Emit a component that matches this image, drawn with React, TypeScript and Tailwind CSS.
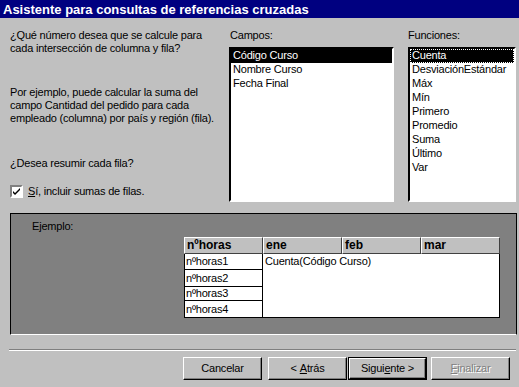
import React from "react";

const campos = ["Código Curso", "Nombre Curso", "Fecha Final"];
const funciones = ["Cuenta", "DesviaciónEstándar", "Máx", "Mín", "Primero", "Promedio", "Suma", "Último", "Var"];
const filas = [
  {label: "nºhoras1", h: "h-[16px]"},
  {label: "nºhoras2", h: "h-[17px]"},
  {label: "nºhoras3", h: "h-[14px]"},
  {label: "nºhoras4", h: "h-[17px]"},
];

const sunken =
  "border-2 border-t-[#808080] border-l-[#808080] border-b-white border-r-white";

const Button = ({children, isDefault = false, disabled = false}: {children: React.ReactNode; isDefault?: boolean; disabled?: boolean}) => (
  <div className={`${isDefault ? "border border-black" : ""} w-[79px] h-[23px]`}>
    <div
      className={`flex h-full w-full items-center justify-center bg-[#c0c0c0] border-t border-l border-t-white border-l-white border-b border-r border-b-black border-r-black shadow-[inset_-1px_-1px_0_#808080] ${
        disabled ? "text-[#808080] [text-shadow:1px_1px_0_#fff]" : "text-black"
      }`}
    >
      {children}
    </div>
  </div>
);

const App = () => {
  return (
    <div
      className="flex h-[387px] w-[519px] flex-col overflow-hidden bg-[#c0c0c0] text-[11px] leading-[13px] tracking-[-0.2px] text-black"
      style={{fontFamily: '"Liberation Sans", Arial, sans-serif'}}
    >
      <div className="flex h-[18px] items-center bg-[#000080] pl-[3px] text-[13px] font-bold tracking-normal text-white">
        Asistente para consultas de referencias cruzadas
      </div>

      <div className="flex h-[195px]">
        <div className="flex w-[219px] flex-col whitespace-nowrap pl-[10px] pt-[11px]">
          <p>
            ¿Qué número desea que se calcule para
            <br />
            cada intersección de columna y fila?
          </p>
          <p className="mt-[31px]">
            Por ejemplo, puede calcular la suma del
            <br />
            campo Cantidad del pedido para cada
            <br />
            empleado (columna) por país y región (fila).
          </p>
          <p className="mt-[32px]">¿Desea resumir cada fila?</p>
          <div className="mt-[15px] flex items-center gap-[5px]">
            <div className={`relative h-[13px] w-[13px] bg-white ${sunken} border-b-[#dfdfdf] border-r-[#dfdfdf]`}>
              <svg viewBox="0 0 9 9" className="absolute left-0 top-0 h-[9px] w-[9px]">
                <path d="M1 4 L1 6 L3 8 L8 3 L8 1 L3 6 Z" fill="black" />
              </svg>
            </div>
            <span>
              <span className="underline">S</span>í, incluir sumas de filas.
            </span>
          </div>
        </div>

        <div className="ml-[10px] flex w-[165px] flex-col pt-[11px]">
          <span className="pl-[1px]">Campos:</span>
          <div className={`mt-[5px] h-[155px] bg-white ${sunken} border-t-black border-l-black`}>
            {campos.map((c, i) => (
              <div key={c} className={`h-[14px] pl-[2px] ${i === 0 ? "bg-black text-white" : ""}`}>
                {c}
              </div>
            ))}
          </div>
        </div>

        <div className="ml-[14px] flex w-[108px] flex-col pt-[11px]">
          <span>Funciones:</span>
          <div className={`mt-[5px] h-[155px] bg-white ${sunken} border-t-black border-l-black`}>
            {funciones.map((f, i) => (
              <div
                key={f}
                className={`h-[14px] pl-[2px] whitespace-nowrap ${i === 0 ? "bg-black text-white outline outline-1 -outline-offset-1 outline-dotted outline-white" : ""}`}
              >
                {f}
              </div>
            ))}
          </div>
        </div>
      </div>

      <div className="ml-[10px] flex h-[122px] w-[507px] flex-col border border-t-black border-l-black border-b-white border-r-black bg-[#808080]">
        <span className="pl-[21px] pt-[6px]">Ejemplo:</span>
        <div className="ml-[173px] mt-[4px] flex flex-col">
          <div className="flex">
            {["nºhoras", "ene", "feb", "mar"].map((h) => (
              <div
                key={h}
                className="flex h-[17px] w-[79px] items-center border-t border-l border-t-white border-l-white border-b border-r border-b-[#404040] border-r-[#404040] bg-[#c0c0c0] pl-[2px] text-[12px] font-bold tracking-normal"
              >
                {h}
              </div>
            ))}
          </div>
          <div className="flex">
            <div className="flex w-[79px] flex-col">
              {filas.map((r) => (
                <div key={r.label} className={`${r.h} flex items-center border border-t-0 border-black bg-white pl-[1px]`}>
                  {r.label}
                </div>
              ))}
            </div>
            <div className="h-[64px] w-[237px] border border-t-0 border-l-0 border-black bg-white pl-[2px] pt-[1px]">
              Cuenta(Código Curso)
            </div>
          </div>
        </div>
      </div>

      <div className="ml-[9px] mt-[14px] h-[2px] w-[507px] border-t border-t-[#808080] border-b border-b-white" />

      <div className="ml-[183px] mt-[6px] flex items-center">
        <Button>Cancelar</Button>
        <div className="ml-[6px]">
          <Button>
            &lt; <span className="ml-[3px] underline">A</span>trás
          </Button>
        </div>
        <div className="ml-[1px]">
          <Button isDefault>
            Sigui<span className="underline">e</span>nte &gt;
          </Button>
        </div>
        <div className="ml-[4px]">
          <Button disabled>
            <span className="underline">F</span>inalizar
          </Button>
        </div>
      </div>
    </div>
  );
};

export default App;
